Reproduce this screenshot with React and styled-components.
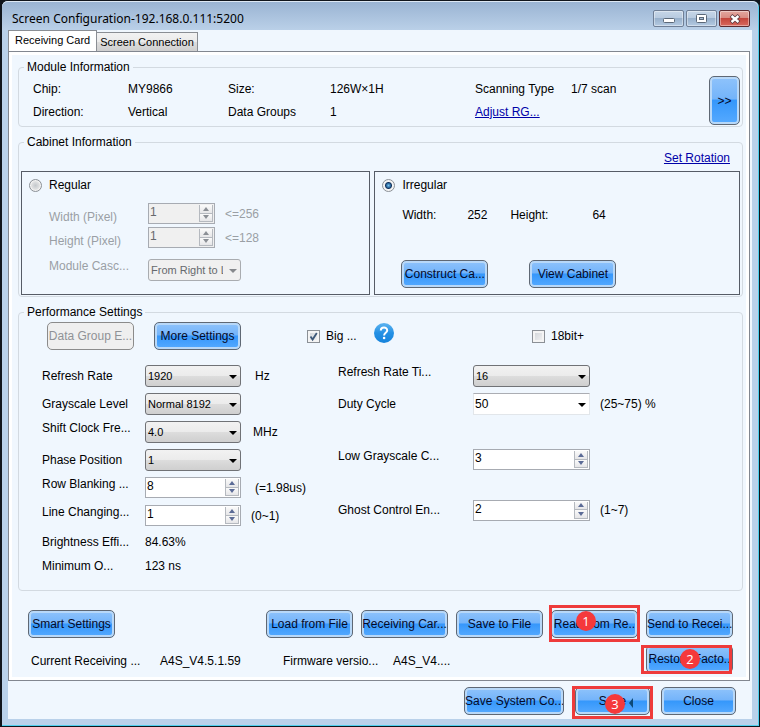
import React from "react";
import styled, { createGlobalStyle, css } from "styled-components";

const GlobalStyle = createGlobalStyle`
  * {
    box-sizing: border-box;
  }

  body {
    margin: 0;
    background: #10151c;
  }

  body, button, input, select {
    font-family: "Liberation Sans", Arial, sans-serif;
    font-size: 12px;
    color: #000000;
  }
`;

const Window = styled.div`
  display: flex;
  flex-direction: column;
  min-height: 100vh;
  padding: 0 7px 7px 6px;
  border: 1px solid #10151c;
  border-left-width: 2px;
  border-radius: 7px 7px 0 0;
  background: #b9d1ea;
  box-shadow: inset -1px -1px 0 #4fd0ee;
`;

const TitleBar = styled.header`
  display: flex;
  align-items: flex-start;
  justify-content: space-between;
  height: 29px;
  margin: 0 -6px;
  padding: 8px 8px 0 10px;
  border-top: 1px solid #dde8f4;
  border-radius: 6px 6px 0 0;
  background: linear-gradient(#9ab4d3, #bad0e8);
`;

const Title = styled.h1`
  margin: 0;
  font-family: "Noto Sans", "Open Sans", sans-serif;
  font-size: 12px;
  font-weight: 400;
  line-height: 18px;
`;

const WindowButtons = styled.div`
  display: flex;
  gap: 2px;
`;

const WindowButton = styled.button`
  display: flex;
  align-items: center;
  justify-content: center;
  width: 31px;
  height: 17px;
  padding: 0;
  border: 1px solid ${(props) => (props.$danger ? "#5c2a2e" : "#6f7f96")};
  border-radius: 2px;
  background: ${(props) =>
    props.$danger
      ? "linear-gradient(#e3a79f, #d98a80 48%, #c4463c 50%, #d8695e)"
      : "linear-gradient(#c6d6e8, #b7cadf 48%, #98b1cc 50%, #b4cae2)"};
  box-shadow: inset 0 0 0 1px rgba(255, 255, 255, 0.4);
`;

const Client = styled.main`
  display: flex;
  flex: 1;
  flex-direction: column;
  background: #f0f7fe;
`;

const Tabs = styled.div`
  display: flex;
  align-items: flex-end;
  height: 22px;
  margin-bottom: -1px;
`;

const Tab = styled.button`
  height: 20px;
  padding: 0 3px;
  border: 1px solid #8a8e94;
  border-left-width: 0;
  background: linear-gradient(#f2f2f2, #ebebeb 50%, #dddddd 50%, #cfcfcf);
  font-size: 11px;

  ${(props) =>
    props.$active &&
    css`
      height: 22px;
      padding: 0 6px 2px;
      border-bottom-color: #ffffff;
      border-left-width: 1px;
      background: #ffffff;
    `}
`;

const Panel = styled.section`
  display: flex;
  flex-direction: column;
  gap: 8px;
  margin-right: 2px;
  padding: 8px 6px 7px 9px;
  border: 1px solid #828790;
  box-shadow: inset 0 0 0 3px #ffffff;
`;

const Group = styled.fieldset`
  min-width: 0;
  margin: 0;
  padding: 0 2px 1px;
  border: 1px solid #d3dae1;
  border-radius: 4px;
`;

const Legend = styled.legend`
  margin-left: 3px;
  padding: 0 3px;
  line-height: 14px;
`;

const ModuleInfo = styled.div`
  display: flex;
  align-items: center;
  padding: 2px 0 0 12px;
`;

const InfoGrid = styled.dl`
  display: grid;
  flex: 1;
  grid-template-columns: 95fr 100fr 102fr 145fr 96fr 138fr;
  margin: 0;
  line-height: 23px;
  white-space: nowrap;

  dd {
    margin: 0;
  }
`;

const Link = styled.a`
  color: #0000a8;
  text-decoration: underline;
`;

const Button = styled.button`
  flex: none;
  width: ${(props) => props.$width || "87px"};
  height: ${(props) => props.$height || "28px"};
  padding: 0;
  border: 1px solid #5f6874;
  border-radius: 5px;
  background: linear-gradient(#8fc3fb, #74b4fa 46%, #3597fb 50%, #56aaff);
  box-shadow: inset 0 0 0 2px #b8d8f8;
  color: #050a28;
  overflow: hidden;
  white-space: nowrap;

  &:disabled {
    border-color: #8b8b8b;
    background: #efefef;
    box-shadow: none;
    color: #8f9296;
  }
`;

const RotationRow = styled.div`
  height: 22px;
  padding-right: 10px;
  line-height: 18px;
  text-align: right;
`;

const Cabinets = styled.div`
  display: flex;
  gap: 4px;
`;

const Cabinet = styled.div`
  flex: ${(props) => props.$grow} 1 0;
  min-height: 124px;
  padding: 5px 7px;
  border: 1px solid #565c66;
`;

const Choice = styled.label`
  display: flex;
  align-items: center;
  gap: ${(props) => props.$gap || "7px"};
  height: 16px;
`;

const Radio = styled.input`
  width: 13px;
  height: 13px;
  margin: 0;
  appearance: none;
  border: 1px solid #8b9096;
  border-radius: 50%;
  background: radial-gradient(#c4c8cc, #e6e6e6 60%);
  box-shadow: inset 0 0 0 1px #f4f4f4;

  &:checked {
    background: radial-gradient(
      circle,
      #7cc4ec 0,
      #2f6da3 2px,
      #16345c 3px,
      #f4f4f4 4px
    );
    box-shadow: none;
  }
`;

const CheckBox = styled.span`
  position: relative;
  display: flex;

  input {
    width: 13px;
    height: 13px;
    margin: 0;
    appearance: none;
    border: 1px solid #8b9096;
    background: linear-gradient(135deg, #cdd1d6, #f6f6f6);
    box-shadow: inset 0 0 0 2px #f4f4f4;
  }

  svg {
    position: absolute;
    inset: 0;
    display: none;
    pointer-events: none;
  }

  input:checked + svg {
    display: block;
  }
`;

const CabinetForm = styled.div`
  display: grid;
  gap: 3px;
  margin-top: 10px;
  padding-left: 20px;

  & + & {
    margin-top: 11px;
  }
`;

const Row = styled.div`
  display: grid;
  grid-template-columns: ${(props) => props.$columns};
  align-items: ${(props) => props.$align || "center"};
  min-height: ${(props) => props.$height || "22px"};
  line-height: 14px;
  white-space: nowrap;
  ${(props) => props.$muted && "color: #9a9fa5;"}
`;

const Unit = styled.span`
  align-self: center;
  padding-left: ${(props) => props.$gap || "10px"};
`;

const Dimensions = styled.dl`
  display: grid;
  grid-template-columns: 65px 43px 82px 1fr;
  margin: 14px 0 37px;
  padding-left: 20px;
  line-height: 16px;

  dd {
    margin: 0;
  }
`;

const CabinetButtons = styled.div`
  display: flex;
  gap: 41px;
  padding-left: 19px;
`;

const SelectBox = styled.span`
  position: relative;
  display: flex;

  &::after {
    content: "";
    position: absolute;
    top: 10px;
    right: 4px;
    border: 4px solid transparent;
    border-top-color: #000000;
    border-bottom-width: 0;
    pointer-events: none;
  }

  select {
    width: 100%;
    height: 22px;
    padding: 0 17px 0 2px;
    appearance: none;
    border: 1px solid #707276;
    border-radius: 3px;
    background: linear-gradient(#f2f2f2, #ebebeb 50%, #dddddd 50%, #cfcfcf);
    font-size: 11px;
  }

  ${(props) =>
    props.$plain &&
    css`
      select {
        padding-left: 1px;
        border-color: #abadb3 #e2e6ea #e2e6ea;
        border-radius: 0;
        background: #ffffff;
        font-size: 12px;
      }
    `}

  &:has(select:disabled)::after {
    border-top-color: #85888c;
  }

  select:disabled {
    border-color: #a9acb0;
    background: #f0f0f0;
    color: #66696d;
    opacity: 1;
  }
`;

const SpinBox = styled.span`
  display: flex;
  height: 21px;
  padding: 1px;
  border: 1px solid #a7abb2;
  background: ${(props) => (props.$disabled ? "#f0f0f0" : "#ffffff")};

  input {
    flex: 1;
    min-width: 0;
    padding: 0 0 3px;
    border: 0;
    background: transparent;
  }

  input:disabled {
    color: #66696d;
  }
`;

const SpinArrows = styled.span`
  display: grid;
  width: 14px;

  button {
    display: flex;
    align-items: center;
    justify-content: center;
    min-height: 0;
    padding: 0;
    border: 1px solid #b5b9bf;
    border-top-width: 0;
    background: linear-gradient(#fafafa, #e6e6e8);
  }

  path {
    fill: #5b6b96;
  }

  button:disabled path {
    fill: #8b8f95;
  }
`;

const Toolbar = styled.div`
  display: grid;
  grid-template-columns: 107fr 153fr 67fr 158fr 208fr;
  align-items: center;
  margin-bottom: 15px;
  padding: 3px 0 0 26px;
`;

const HelpButton = styled.button`
  display: flex;
  width: 20px;
  padding: 0 0 6px;
  border: 0;
  background: none;
`;

const Settings = styled.div`
  display: grid;
  grid-template-columns: 296fr 402fr;
  padding: 0 0 14px 21px;
`;

const Fields = styled.div`
  display: grid;
  align-content: start;
  gap: 6px;
`;

const LowerFields = styled(Fields)`
  gap: 28px;
  margin-top: 34px;
`;

const Actions = styled.div`
  display: grid;
  gap: 7px;
  margin-top: 11px;
  padding: 0 10px;
`;

const ActionRow = styled.div`
  display: flex;
  align-items: center;
  gap: 8px;
`;

const Spacer = styled.span`
  flex: 1;
`;

const Versions = styled.dl`
  display: grid;
  flex: 1;
  grid-template-columns: 129fr 123fr 110fr 245fr;
  margin: 0;
  padding: 3px 0 0 3px;
  white-space: nowrap;

  dd {
    margin: 0;
  }
`;

const Marked = styled.span`
  position: relative;
  display: flex;

  &::after {
    content: "";
    position: absolute;
    inset: ${(props) => props.$inset};
    border: 3px solid #ee3b3b;
    pointer-events: none;
  }
`;

const Badge = styled.span`
  position: absolute;
  top: ${(props) => props.$top};
  left: ${(props) => props.$left};
  width: 20px;
  height: 20px;
  border-radius: 50%;
  background: #f5393b;
  color: #ffffff;
  font-family: "Open Sans", "Noto Sans", sans-serif;
  font-size: 13px;
  line-height: 20px;
  text-align: center;
`;

const Pointer = styled.svg`
  position: absolute;
  top: 10px;
  left: 53px;
`;

const Footer = styled.footer`
  display: flex;
  justify-content: flex-end;
  gap: 11px;
  padding: 6px 16px 4px;
`;

const LEFT = "103px 96px 1fr";
const RIGHT = "135px 117px 1fr";
const CABINET = "99px 67px 1fr";

function Select({ id, options, plain, disabled }) {
  return (
    <SelectBox $plain={plain}>
      <select id={id} disabled={disabled}>
        {options.map((option) => (
          <option key={option}>{option}</option>
        ))}
      </select>
    </SelectBox>
  );
}

function Spin({ id, value, disabled }) {
  return (
    <SpinBox $disabled={disabled}>
      <input id={id} defaultValue={value} disabled={disabled} />
      <SpinArrows>
        <button type="button" aria-label="Increase" disabled={disabled}>
          <svg width="6" height="4" viewBox="0 0 6 4">
            <path d="M0 4L3 0L6 4Z" />
          </svg>
        </button>
        <button type="button" aria-label="Decrease" disabled={disabled}>
          <svg width="6" height="4" viewBox="0 0 6 4">
            <path d="M0 0L3 4L6 0Z" />
          </svg>
        </button>
      </SpinArrows>
    </SpinBox>
  );
}

function Check({ label, checked }) {
  return (
    <Choice $gap="6px">
      <CheckBox>
        <input type="checkbox" defaultChecked={checked} />
        <svg width="13" height="13" viewBox="0 0 13 13">
          <path
            d="M3.5 6.5L5.6 9.6L9.8 3"
            fill="none"
            stroke="#3d5878"
            strokeWidth="1.8"
          />
        </svg>
      </CheckBox>
      {label}
    </Choice>
  );
}

function ModuleInformation() {
  return (
    <Group>
      <Legend>Module Information</Legend>
      <ModuleInfo>
        <InfoGrid>
          <dt>Chip:</dt>
          <dd>MY9866</dd>
          <dt>Size:</dt>
          <dd>126W×1H</dd>
          <dt>Scanning Type</dt>
          <dd>1/7 scan</dd>
          <dt>Direction:</dt>
          <dd>Vertical</dd>
          <dt>Data Groups</dt>
          <dd>1</dd>
          <dt>
            <Link href="#adjust">Adjust RG...</Link>
          </dt>
        </InfoGrid>
        <Button $width="31px" $height="49px">
          &gt;&gt;
        </Button>
      </ModuleInfo>
    </Group>
  );
}

function CabinetInformation() {
  return (
    <Group>
      <Legend>Cabinet Information</Legend>
      <RotationRow>
        <Link href="#rotation">Set Rotation</Link>
      </RotationRow>
      <Cabinets>
        <Cabinet $grow={349}>
          <Choice>
            <Radio type="radio" name="cabinet" />
            Regular
          </Choice>
          <CabinetForm>
            <Row $columns={CABINET} $align="end" $height="21px" $muted>
              <label htmlFor="width">Width (Pixel)</label>
              <Spin id="width" value="1" disabled />
              <Unit>&lt;=256</Unit>
            </Row>
            <Row $columns={CABINET} $align="end" $height="21px" $muted>
              <label htmlFor="height">Height (Pixel)</label>
              <Spin id="height" value="1" disabled />
              <Unit>&lt;=128</Unit>
            </Row>
          </CabinetForm>
          <CabinetForm>
            <Row $columns="99px 93px" $align="start" $muted>
              <label htmlFor="cascade">Module Casc...</label>
              <Select id="cascade" options={["From Right to Left"]} disabled />
            </Row>
          </CabinetForm>
        </Cabinet>
        <Cabinet $grow={366}>
          <Choice>
            <Radio type="radio" name="cabinet" defaultChecked />
            Irregular
          </Choice>
          <Dimensions>
            <dt>Width:</dt>
            <dd>252</dd>
            <dt>Height:</dt>
            <dd>64</dd>
          </Dimensions>
          <CabinetButtons>
            <Button>Construct Ca...</Button>
            <Button>View Cabinet</Button>
          </CabinetButtons>
        </Cabinet>
      </Cabinets>
    </Group>
  );
}

function HelpIcon() {
  return (
    <svg width="20" height="20" viewBox="0 0 20 20">
      <defs>
        <linearGradient id="help" x1="0" y1="0" x2="0" y2="1">
          <stop offset="0" stopColor="#5db4f0" />
          <stop offset="0.5" stopColor="#2490e4" />
          <stop offset="1" stopColor="#1683dc" />
        </linearGradient>
      </defs>
      <circle cx="10" cy="10" r="10" fill="url(#help)" />
      <path
        d="M6.8 7.6C6.8 3.6 13.2 3.6 13.2 7.4C13.2 9.8 10.1 9.8 10.1 12.4"
        fill="none"
        stroke="#ffffff"
        strokeWidth="2"
      />
      <circle cx="10.1" cy="15" r="1.3" fill="#ffffff" />
    </svg>
  );
}

function PerformanceSettings() {
  return (
    <Group>
      <Legend>Performance Settings</Legend>
      <Toolbar>
        <Button disabled>Data Group E...</Button>
        <Button>More Settings</Button>
        <Check label="Big ..." checked />
        <HelpButton type="button" aria-label="Help">
          <HelpIcon />
        </HelpButton>
        <Check label="18bit+" />
      </Toolbar>
      <Settings>
        <Fields>
          <Row $columns={LEFT}>
            <label htmlFor="refresh">Refresh Rate</label>
            <Select id="refresh" options={["1920"]} />
            <Unit $gap="14px">Hz</Unit>
          </Row>
          <Row $columns={LEFT}>
            <label htmlFor="grayscale">Grayscale Level</label>
            <Select id="grayscale" options={["Normal 8192"]} />
          </Row>
          <Row $columns={LEFT} $align="start">
            <label htmlFor="clock">Shift Clock Fre...</label>
            <Select id="clock" options={["4.0"]} />
            <Unit $gap="12px">MHz</Unit>
          </Row>
          <Row $columns={LEFT}>
            <label htmlFor="phase">Phase Position</label>
            <Select id="phase" options={["1"]} />
          </Row>
          <Row $columns={LEFT} $align="start">
            <label htmlFor="blanking">Row Blanking ...</label>
            <Spin id="blanking" value="8" />
            <Unit $gap="14px">(=1.98us)</Unit>
          </Row>
          <Row $columns={LEFT} $align="start">
            <label htmlFor="changing">Line Changing...</label>
            <Spin id="changing" value="1" />
            <Unit>(0~1)</Unit>
          </Row>
          <Row $columns={LEFT} $height="18px">
            <span>Brightness Effi...</span>
            <span>84.63%</span>
          </Row>
          <Row $columns={LEFT} $height="18px">
            <span>Minimum O...</span>
            <span>123 ns</span>
          </Row>
        </Fields>
        <div>
          <Fields>
            <Row $columns={RIGHT} $align="start">
              <label htmlFor="times">Refresh Rate Ti...</label>
              <Select id="times" options={["16"]} />
            </Row>
            <Row $columns={RIGHT}>
              <label htmlFor="duty">Duty Cycle</label>
              <Select id="duty" options={["50"]} plain />
              <Unit>(25~75) %</Unit>
            </Row>
          </Fields>
          <LowerFields>
            <Row $columns={RIGHT} $align="start">
              <label htmlFor="low">Low Grayscale C...</label>
              <Spin id="low" value="3" />
            </Row>
            <Row $columns={RIGHT}>
              <label htmlFor="ghost">Ghost Control En...</label>
              <Spin id="ghost" value="2" />
              <Unit>(1~7)</Unit>
            </Row>
          </LowerFields>
        </div>
      </Settings>
    </Group>
  );
}

function App() {
  return (
    <>
      <GlobalStyle />
      <Window>
        <TitleBar>
          <Title>Screen Configuration-192.168.0.111:5200</Title>
          <WindowButtons>
            <WindowButton aria-label="Minimize">
              <svg width="12" height="9" viewBox="0 0 12 9">
                <rect x="0.5" y="4.5" width="11" height="4" rx="1" fill="#fff" stroke="#5b6878" />
              </svg>
            </WindowButton>
            <WindowButton aria-label="Maximize">
              <svg width="11" height="9" viewBox="0 0 11 9">
                <rect x="0.5" y="0.5" width="10" height="8" rx="1" fill="#fff" stroke="#5b6878" />
                <rect x="3.5" y="3.5" width="4" height="2" fill="#a9bdd3" stroke="#5b6878" />
              </svg>
            </WindowButton>
            <WindowButton aria-label="Close window" $danger>
              <svg width="12" height="10" viewBox="0 0 12 10">
                <path d="M2 1.5L10 8.5M10 1.5L2 8.5" stroke="#5a3940" strokeWidth="4" />
                <path d="M2.5 2L9.5 8M9.5 2L2.5 8" stroke="#ffffff" strokeWidth="2.4" />
              </svg>
            </WindowButton>
          </WindowButtons>
        </TitleBar>
        <Client>
          <Tabs>
            <Tab $active>Receiving Card</Tab>
            <Tab>Screen Connection</Tab>
          </Tabs>
          <Panel>
            <ModuleInformation />
            <CabinetInformation />
            <PerformanceSettings />
            <Actions>
              <ActionRow>
                <Button>Smart Settings</Button>
                <Spacer />
                <Button>Load from File</Button>
                <Button>Receiving Car...</Button>
                <Button>Save to File</Button>
                <Marked $inset="-5px -2px -4px">
                  <Button>Read from Re..</Button>
                  <Badge $top="1px" $left="25px">1</Badge>
                </Marked>
                <Button>Send to Recei...</Button>
              </ActionRow>
              <ActionRow>
                <Versions>
                  <dt>Current Receiving ...</dt>
                  <dd>A4S_V4.5.1.59</dd>
                  <dt>Firmware versio...</dt>
                  <dd>A4S_V4....</dd>
                </Versions>
                <Marked $inset="0 1px -1px -5px">
                  <Button>Restore Facto..</Button>
                  <Badge $top="4px" $left="34px">2</Badge>
                </Marked>
              </ActionRow>
            </Actions>
          </Panel>
          <Footer>
            <Button $width="100px">Save System Co...</Button>
            <Marked $inset="-1px -3px -4px">
              <Button $width="75px">Save</Button>
              <Pointer width="6" height="12" viewBox="0 0 6 12">
                <path d="M5 1V11L1 6Z" fill="#0d4a78" />
              </Pointer>
              <Badge $top="7px" $left="30px">3</Badge>
            </Marked>
            <Button $width="75px">Close</Button>
          </Footer>
        </Client>
      </Window>
    </>
  );
}

export default App;
